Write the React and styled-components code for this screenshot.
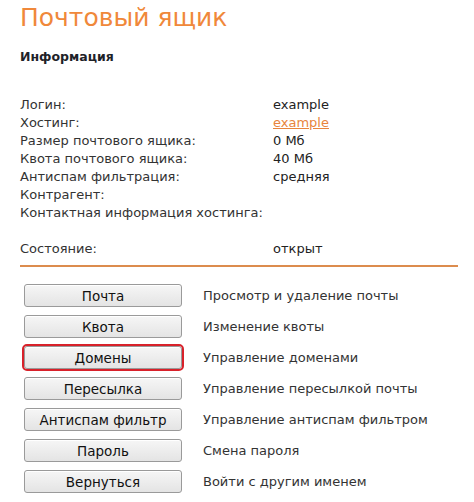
import React from 'react';
import styled, { createGlobalStyle } from 'styled-components';

const GlobalStyle = createGlobalStyle`
  body {
    margin: 0;
    background: #fff;
    font-family: "DejaVu Sans", "Liberation Sans", sans-serif;
    color: #222;
  }
`;

const Page = styled.div`
  width: 474px;
  padding: 0 16px 0 20px;
  box-sizing: border-box;
`;

const Title = styled.h1`
  margin: 0;
  padding-top: 3px;
  font-size: 25px;
  font-weight: normal;
  line-height: 30px;
  color: #f0883a;
`;

const Section = styled.h2`
  margin: 17px 0 0;
  font-size: 12.5px;
  font-weight: bold;
  line-height: 14px;
  color: #1e2228;
`;

const InfoTable = styled.div`
  display: grid;
  grid-template-columns: 253px 1fr;
  margin-top: 32px;
  font-size: 13px;
  line-height: 18px;
`;

const Label = styled.div`
  color: #333;
`;

const Value = styled.div`
  color: #222;
`;

const Link = styled.a`
  color: #e8843c;
  text-decoration: underline;
`;

const Spacer = styled.div`
  grid-column: 1 / -1;
  height: ${p => p.h || 18}px;
`;

const Rule = styled.hr`
  margin: 7px 0 0;
  border: 0;
  height: 2px;
  background: #dc8c4e;
`;

const Actions = styled.div`
  display: flex;
  flex-direction: column;
  gap: 8px;
  margin-top: 17px;
  padding-left: 4px;
`;

const ActionRow = styled.div`
  display: flex;
  align-items: center;
  gap: 21px;
`;

const Button = styled.button`
  width: 158px;
  height: 23px;
  padding: 0;
  box-sizing: border-box;
  font-family: "DejaVu Sans", sans-serif;
  font-size: 13.5px;
  color: #111;
  border: 1px solid #9a9a9a;
  border-radius: 3px;
  background: linear-gradient(#f6f6f6, #e4e4e4);
  box-shadow: inset 0 1px 0 #fff;
  outline: ${p => (p.$focused ? '2px solid #d8212a' : 'none')};
  outline-offset: 0;
  cursor: pointer;
`;

const Desc = styled.span`
  font-size: 13px;
  color: #333;
`;

const info = [
  ['Логин:', 'example'],
  ['Хостинг:', 'link'],
  ['Размер почтового ящика:', '0 Мб'],
  ['Квота почтового ящика:', '40 Мб'],
  ['Антиспам фильтрация:', 'средняя'],
  ['Контрагент:', ''],
  ['Контактная информация хостинга:', ''],
];

const actions = [
  ['Почта', 'Просмотр и удаление почты'],
  ['Квота', 'Изменение квоты'],
  ['Домены', 'Управление доменами', true],
  ['Пересылка', 'Управление пересылкой почты'],
  ['Антиспам фильтр', 'Управление антиспам фильтром'],
  ['Пароль', 'Смена пароля'],
  ['Вернуться', 'Войти с другим именем'],
];

export default function App() {
  return (
    <>
      <GlobalStyle />
      <Page>
        <Title>Почтовый ящик</Title>
        <Section>Информация</Section>
        <InfoTable>
          {info.map(([k, v]) => (
            <React.Fragment key={k}>
              <Label>{k}</Label>
              <Value>{v === 'link' ? <Link href="#">example</Link> : v}</Value>
            </React.Fragment>
          ))}
          <Spacer h={18} />
          <Label>Состояние:</Label>
          <Value>открыт</Value>
        </InfoTable>
        <Rule />
        <Actions>
          {actions.map(([b, d, f]) => (
            <ActionRow key={b}>
              <Button $focused={f}>{b}</Button>
              <Desc>{d}</Desc>
            </ActionRow>
          ))}
        </Actions>
      </Page>
    </>
  );
}
